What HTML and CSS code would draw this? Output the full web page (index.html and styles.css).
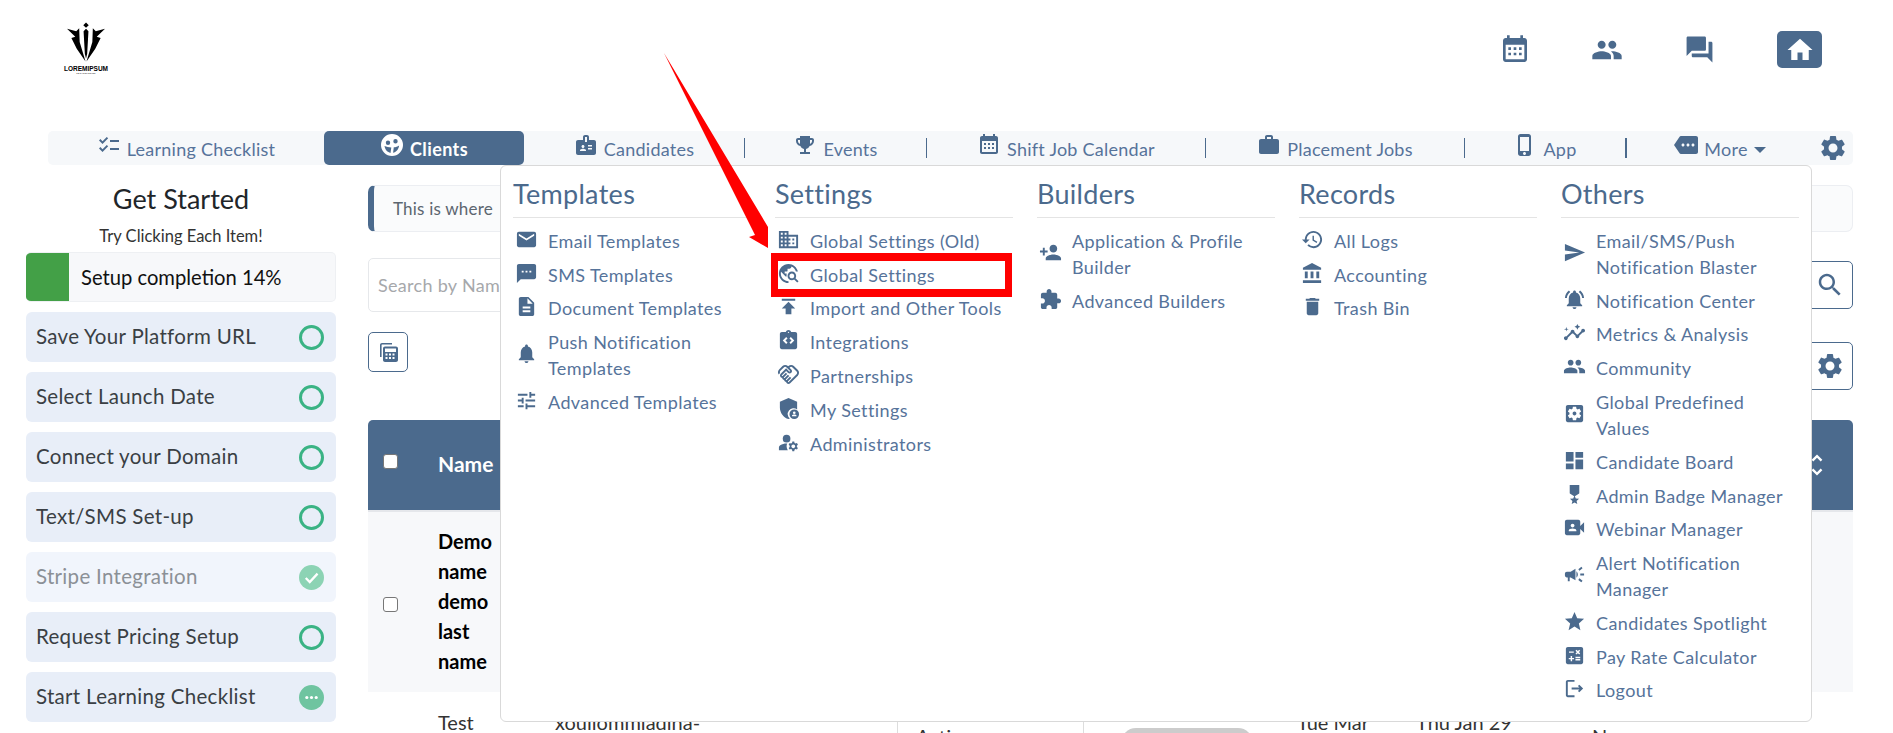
FILE: index.html
```html
<!DOCTYPE html>
<html lang="en">
<head>
<meta charset="utf-8">
<title>Clients</title>
<link rel="stylesheet" href="styles.css">
</head>
<body>
<svg class="sprite" aria-hidden="true">
<symbol id="i-email" viewBox="0 0 24 24"><path d="M20 4H4c-1.1 0-1.99.9-1.99 2L2 18c0 1.1.9 2 2 2h16c1.1 0 2-.9 2-2V6c0-1.1-.9-2-2-2zm0 4l-8 5-8-5V6l8 5 8-5v2z"/></symbol>
<symbol id="i-sms" viewBox="0 0 24 24"><path d="M20 2H4c-1.1 0-1.99.9-1.99 2L2 22l4-4h14c1.1 0 2-.9 2-2V4c0-1.1-.9-2-2-2zM9 11H7V9h2v2zm4 0h-2V9h2v2zm4 0h-2V9h2v2z"/></symbol>
<symbol id="i-doc" viewBox="0 0 24 24"><path d="M14 2H6c-1.1 0-1.99.9-1.99 2L4 20c0 1.1.89 2 1.99 2H18c1.1 0 2-.9 2-2V8l-6-6zm2 16H8v-2h8v2zm0-4H8v-2h8v2zm-3-5V3.500L18.500 9H13z"/></symbol>
<symbol id="i-bell" viewBox="0 0 24 24"><path d="M12 22c1.1 0 2-.9 2-2h-4c0 1.1.89 2 2 2zm6-6v-5c0-3.07-1.64-5.64-4.500-6.32V4c0-.83-.67-1.500-1.500-1.500s-1.500.67-1.500 1.500v.68C7.630 5.360 6 7.920 6 11v5l-2 2v1h16v-1l-2-2z"/></symbol>
<symbol id="i-tune" viewBox="0 0 24 24"><path d="M3 17v2h6v-2H3zM3 5v2h10V5H3zm10 16v-2h8v-2h-8v-2h-2v6h2zM7 9v2H3v2h4v2h2V9H7zm14 4v-2H11v2h10zm-6-4h2V7h4V5h-4V3h-2v6z"/></symbol>
<symbol id="i-domain" viewBox="0 0 24 24"><path d="M12 7V3H2v18h20V7H12zM6 19H4v-2h2v2zm0-4H4v-2h2v2zm0-4H4V9h2v2zm0-4H4V5h2v2zm4 12H8v-2h2v2zm0-4H8v-2h2v2zm0-4H8V9h2v2zm0-4H8V5h2v2zm10 12h-8v-2h2v-2h-2v-2h2v-2h-2V9h8v10zm-2-8h-2v2h2v-2zm0 4h-2v2h2v-2z"/></symbol>
<symbol id="i-travel" viewBox="0 0 24 24"><path d="M19.3 16.9c.4-.7.7-1.500.7-2.400 0-2.500-2-4.500-4.500-4.500S11 12 11 14.500s2 4.500 4.500 4.500c.9 0 1.700-.3 2.400-.7l3.200 3.200 1.400-1.400-3.200-3.200zm-3.800.1c-1.400 0-2.500-1.100-2.500-2.500s1.100-2.500 2.500-2.500 2.500 1.100 2.500 2.500-1.100 2.500-2.500 2.500zM12 20v2C6.480 22 2 17.520 2 12S6.480 2 12 2c4.840 0 8.870 3.440 9.800 8h-2.070c-.64-2.460-2.400-4.470-4.730-5.410V5c0 1.100-.9 2-2 2h-2v2c0 .55-.45 1-1 1H8v2h2v3H9l-4.790-4.790C4.080 10.790 4 11.380 4 12c0 4.410 3.590 8 8 8z"/></symbol>
<symbol id="i-publish" viewBox="0 0 24 24"><path d="M5 4v2h14V4H5zm0 10h4v6h6v-6h4l-7-7-7 7z"/></symbol>
<symbol id="i-integ" viewBox="0 0 24 24"><path d="M19 3h-4.180C14.400 1.840 13.300 1 12 1s-2.400.84-2.820 2H5c-1.100 0-2 .9-2 2v14c0 1.100.9 2 2 2h14c1.100 0 2-.9 2-2V5c0-1.100-.9-2-2-2zm-7-.25c.41 0 .75.34.75.75s-.34.75-.75.75-.75-.34-.75-.75.34-.75.75-.75zM11 14.170l-1.410 1.420L6 12l3.590-3.590L11 9.830 8.830 12 11 14.170zm3.410 1.420L13 14.170 15.170 12 13 9.830l1.410-1.420L18 12l-3.590 3.590z"/></symbol>
<symbol id="i-hand" viewBox="0 0 24 24"><path d="M12.220 19.850c-.18.18-.5.21-.71 0-.18-.18-.21-.5 0-.71l3.390-3.390-1.410-1.410-3.390 3.390c-.19.2-.51.19-.71 0-.21-.21-.18-.53 0-.71l3.390-3.390-1.410-1.410-3.390 3.390c-.18.18-.5.21-.71 0-.19-.19-.19-.51 0-.71l3.390-3.390-1.420-1.410-3.390 3.390c-.18.18-.5.21-.71 0-.19-.2-.19-.51 0-.71L9.520 8.400l1.870 1.860c.95.95 2.590.94 3.540 0 .98-.98.98-2.560 0-3.540l-1.860-1.860.28-.28c.78-.78 2.050-.78 2.830 0l4.240 4.240c.78.78.78 2.050 0 2.830l-8.200 8.200zm9.610-6.780c1.560-1.560 1.560-4.090 0-5.660l-4.240-4.240c-1.560-1.560-4.090-1.560-5.660 0l-.28.28-.28-.28c-1.560-1.560-4.090-1.560-5.660 0L2.170 6.710C.75 8.130.62 10.340 1.770 11.900l1.450-1.450c-.39-.75-.26-1.700.37-2.330l3.540-3.540c.78-.78 2.050-.78 2.830 0l3.560 3.560c.18.18.21.5 0 .71-.21.21-.53.18-.71 0L9.520 5.570l-5.660 5.660c-.98.97-.98 2.560 0 3.540.39.39.89.64 1.420.71.07.52.31 1.020.71 1.420.4.4.9.64 1.420.71.07.52.31 1.020.71 1.420.4.4.9.64 1.420.71.07.54.31 1.030.71 1.420.47.47 1.100.73 1.770.73.67 0 1.300-.26 1.770-.73l8.210-8.210z"/></symbol>
<symbol id="i-shield" viewBox="0 0 24 24"><path d="M12 1L3 5v6c0 5.550 3.840 10.740 9 12 .5-.12.99-.29 1.460-.5A6 6 0 0 1 21 13V5l-9-4z"/><path fill-rule="evenodd" d="M18 13a5 5 0 1 1 0 10 5 5 0 0 1 0-10zm0 2a1.400 1.400 0 1 0 0 2.800 1.400 1.400 0 0 0 0-2.800zm-2.300 4.200v.8h4.600v-.8c0-.6-1.500-1-2.300-1s-2.300.4-2.300 1z"/></symbol>
<symbol id="i-admin" viewBox="0 0 24 24"><circle cx="10" cy="8" r="4"/><path d="M10.670 13.020C10.450 13.010 10.230 13 10 13c-2.420 0-4.680.67-6.610 1.820-.88.52-1.390 1.500-1.390 2.530V20h9.260c-.79-1.130-1.260-2.510-1.260-4 0-1.070.25-2.070.67-2.980zM20.750 16c0-.22-.03-.42-.06-.63l1.140-1.010-1-1.730-1.450.49c-.32-.27-.68-.48-1.080-.63L18 11h-2l-.3 1.490c-.4.15-.76.36-1.080.63l-1.450-.49-1 1.730 1.140 1.010c-.03.21-.06.41-.06.63s.03.42.06.63l-1.140 1.010 1 1.730 1.450-.49c.32.27.68.48 1.080.63L16 21h2l.3-1.490c.4-.15.76-.36 1.080-.63l1.450.49 1-1.730-1.140-1.010c.03-.21.06-.41.06-.63zM17 18c-1.100 0-2-.9-2-2s.9-2 2-2 2 .9 2 2-.9 2-2 2z"/></symbol>
<symbol id="i-padd" viewBox="0 0 24 24"><path d="M15 12c2.210 0 4-1.790 4-4s-1.790-4-4-4-4 1.790-4 4 1.790 4 4 4zm-9-2V7H4v3H1v2h3v3h2v-3h3v-2H6zm9 4c-2.670 0-8 1.340-8 4v2h16v-2c0-2.660-5.330-4-8-4z"/></symbol>
<symbol id="i-ext" viewBox="0 0 24 24"><path d="M20.500 11H19V7c0-1.100-.9-2-2-2h-4V3.500C13 2.120 11.880 1 10.500 1S8 2.120 8 3.500V5H4c-1.100 0-1.990.9-1.990 2v3.800H3.500c1.490 0 2.700 1.210 2.700 2.700s-1.210 2.700-2.700 2.700H2V20c0 1.100.9 2 2 2h3.800v-1.500c0-1.490 1.210-2.700 2.700-2.700 1.490 0 2.700 1.210 2.700 2.700V22H17c1.100 0 2-.9 2-2v-4h1.500c1.380 0 2.500-1.120 2.500-2.500S21.880 11 20.500 11z"/></symbol>
<symbol id="i-hist" viewBox="0 0 24 24"><path d="M13 3c-4.970 0-9 4.030-9 9H1l3.890 3.890.07.14L9 12H6c0-3.870 3.130-7 7-7s7 3.130 7 7-3.130 7-7 7c-1.930 0-3.680-.79-4.940-2.060l-1.420 1.420C8.270 19.990 10.510 21 13 21c4.970 0 9-4.030 9-9s-4.030-9-9-9zm-1 5v5l4.280 2.540.72-1.210-3.500-2.080V8H12z"/></symbol>
<symbol id="i-bank" viewBox="0 0 24 24"><path d="M4 10v7h3v-7H4zm6 0v7h3v-7h-3zM2 22h19v-3H2v3zm14-12v7h3v-7h-3zm-4.500-9L2 6v2h19V6l-9.500-5z"/></symbol>
<symbol id="i-trash" viewBox="0 0 24 24"><path d="M6 19c0 1.100.9 2 2 2h8c1.100 0 2-.9 2-2V7H6v12zM19 4h-3.500l-1-1h-5l-1 1H5v2h14V4z"/></symbol>
<symbol id="i-send" viewBox="0 0 24 24"><path d="M2.010 21L23 12 2.010 3 2 10l15 2-15 2z"/></symbol>
<symbol id="i-bella" viewBox="0 0 24 24"><path d="M7.580 4.080L6.150 2.650C3.750 4.480 2.170 7.300 2.030 10.500h2c.15-2.650 1.510-4.970 3.550-6.420zm12.390 6.420h2c-.15-3.200-1.730-6.020-4.120-7.850l-1.420 1.430c2.020 1.450 3.390 3.770 3.540 6.420zM18 11c0-3.070-1.640-5.640-4.500-6.320V4c0-.83-.67-1.500-1.500-1.500s-1.500.67-1.500 1.500v.68C7.630 5.360 6 7.920 6 11v5l-2 2v1h16v-1l-2-2v-5zm-6 11c.14 0 .27-.01.4-.04.65-.14 1.180-.58 1.440-1.180.1-.24.15-.5.15-.78h-4c.01 1.100.9 2 2.010 2z"/></symbol>
<symbol id="i-insight" viewBox="0 0 24 24"><path d="M21 8c-1.450 0-2.260 1.440-1.930 2.510l-3.550 3.560c-.3-.09-.74-.09-1.040 0l-2.550-2.550C12.270 10.450 11.460 9 10 9c-1.450 0-2.270 1.440-1.930 2.520l-4.560 4.550C2.440 15.740 1 16.550 1 18c0 1.100.9 2 2 2 1.450 0 2.260-1.440 1.930-2.510l4.550-4.560c.3.09.74.09 1.040 0l2.550 2.550C12.730 16.550 13.540 18 15 18c1.450 0 2.270-1.440 1.930-2.520l3.560-3.550c1.070.33 2.510-.48 2.510-1.930 0-1.100-.9-2-2-2z"/><path d="M15 9l.94-2.070L18 6l-2.060-.93L15 3l-.92 2.070L12 6l2.080.93zM3.500 11L4 9l2-.5L4 8l-.5-2L3 8l-2 .5L3 9z"/></symbol>
<symbol id="i-people" viewBox="0 0 24 24"><path d="M16 11c1.660 0 2.990-1.340 2.990-3S17.660 5 16 5c-1.660 0-3 1.340-3 3s1.340 3 3 3zm-8 0c1.660 0 2.990-1.340 2.990-3S9.660 5 8 5C6.340 5 5 6.340 5 8s1.340 3 3 3zm0 2c-2.330 0-7 1.170-7 3.500V19h14v-2.500c0-2.330-4.670-3.500-7-3.500zm8 0c-.29 0-.62.02-.97.05 1.160.84 1.970 1.970 1.970 3.450V19h6v-2.500c0-2.330-4.670-3.500-7-3.500z"/></symbol>
<symbol id="i-sapp" viewBox="0 0 24 24"><path d="M12 10c-1.100 0-2 .9-2 2s.9 2 2 2 2-.9 2-2-.9-2-2-2zm7-7H5c-1.110 0-2 .9-2 2v14c0 1.100.89 2 2 2h14c1.110 0 2-.9 2-2V5c0-1.100-.89-2-2-2zm-1.750 9c0 .23-.02.46-.05.68l1.480 1.160c.13.11.17.3.08.45l-1.400 2.420c-.09.15-.27.21-.43.15l-1.740-.7c-.36.28-.76.51-1.180.69l-.26 1.850c-.03.17-.18.3-.35.3h-2.800c-.17 0-.32-.13-.35-.29l-.26-1.850c-.43-.18-.82-.41-1.180-.69l-1.740.7c-.16.06-.34 0-.43-.15l-1.400-2.420c-.09-.15-.05-.34.08-.45l1.480-1.160c-.03-.23-.05-.46-.05-.69 0-.23.02-.46.05-.68l-1.480-1.160c-.13-.11-.17-.3-.08-.45l1.400-2.420c.09-.15.27-.21.43-.15l1.740.7c.36-.28.76-.51 1.180-.69l.26-1.850c.03-.17.18-.3.35-.3h2.800c.17 0 .32.13.35.29l.26 1.850c.43.18.82.41 1.180.69l1.740-.7c.16-.06.34 0 .43.15l1.400 2.420c.09.15.05.34-.08.45l-1.480 1.160c.03.23.05.46.05.69z"/></symbol>
<symbol id="i-dash" viewBox="0 0 24 24"><path d="M3 13h8V3H3v10zm0 8h8v-6H3v6zm10 0h8V11h-8v10zm0-18v6h8V3h-8z"/></symbol>
<symbol id="i-medal" viewBox="0 0 24 24"><path d="M17 10.430V2H7v8.430c0 .35.18.68.49.86l4.180 2.510-.99 2.340-3.410.29 2.590 2.240L9.070 22 12 20.230 14.930 22l-.78-3.330 2.590-2.240-3.410-.29-.99-2.340 4.180-2.510c.3-.18.48-.5.48-.86z"/></symbol>
<symbol id="i-video" viewBox="0 0 24 24"><path d="M18 10.480V6c0-1.100-.9-2-2-2H4c-1.100 0-2 .9-2 2v12c0 1.100.9 2 2 2h12c1.100 0 2-.9 2-2v-4.480l4 3.980v-11l-4 3.980zM10 8c1.100 0 2 .9 2 2s-.9 2-2 2-2-.9-2-2 .9-2 2-2zm4 8H6v-.57c0-.81.48-1.530 1.220-1.850.85-.37 1.790-.58 2.780-.58.99 0 1.930.21 2.780.58.74.32 1.220 1.040 1.220 1.850V16z"/></symbol>
<symbol id="i-camp" viewBox="0 0 24 24"><path d="M18 11v2h4v-2h-4zm-2 6.610c.96.71 2.210 1.650 3.200 2.390.4-.53.8-1.070 1.200-1.600-.99-.74-2.240-1.680-3.200-2.400-.4.54-.8 1.080-1.200 1.610zM20.400 5.600c-.4-.53-.8-1.070-1.200-1.600-.99.74-2.240 1.680-3.200 2.400.4.53.8 1.070 1.200 1.600.96-.72 2.210-1.650 3.200-2.400zM4 9c-1.100 0-2 .9-2 2v2c0 1.100.9 2 2 2h1v4h2v-4h1l5 3V6L8 9H4zm11.500 3c0-1.330-.58-2.530-1.500-3.350v6.690c.92-.81 1.500-2.010 1.500-3.340z"/></symbol>
<symbol id="i-star" viewBox="0 0 24 24"><path d="M12 17.270L18.180 21l-1.640-7.030L22 9.240l-7.190-.61L12 2 9.190 8.630 2 9.240l5.460 4.730L5.820 21z"/></symbol>
<symbol id="i-calc" viewBox="0 0 24 24"><path d="M19 3H5c-1.100 0-2 .9-2 2v14c0 1.100.9 2 2 2h14c1.100 0 2-.9 2-2V5c0-1.100-.9-2-2-2zm-5.970 4.060L14.090 6l1.410 1.410L16.910 6l1.060 1.060-1.410 1.410 1.410 1.410-1.060 1.060-1.410-1.400-1.410 1.410-1.060-1.060 1.410-1.410-1.410-1.420zm-6.780.66h5v1.500h-5v-1.500zM11.500 16h-2v2H8v-2H6v-1.500h2v-2h1.500v2h2V16zm6.500 1.250h-5v-1.500h5v1.500zm0-2.500h-5v-1.500h5v1.500z"/></symbol>
<symbol id="i-logout" viewBox="0 0 24 24"><path d="M17 8l-1.410 1.410L17.170 11H9v2h8.170l-1.580 1.580L17 16l4-4-4-4zM5 5h7V3H5c-1.100 0-2 .9-2 2v14c0 1.100.9 2 2 2h7v-2H5V5z"/></symbol>
<symbol id="i-check" viewBox="0 0 24 24"><path d="M22 7h-9v2h9V7zm0 8h-9v2h9v-2zM5.540 11L2 7.460l1.410-1.410 2.120 2.120 4.240-4.240 1.410 1.410L5.540 11zm0 8L2 15.460l1.410-1.410 2.120 2.120 4.240-4.240 1.410 1.410L5.540 19z"/></symbol>
<symbol id="i-face" viewBox="0 0 24 24"><path fill-rule="evenodd" d="M12 1a11 11 0 1 1 0 22 11 11 0 0 1 0-22zM8 7.500a2.200 2.200 0 1 0 0 4.400 2.200 2.200 0 0 0 0-4.400zm7.500-1.500a2.200 2.200 0 1 0 0 4.400 2.200 2.200 0 0 0 0-4.400zM4.500 13c.5 3.800 3.200 6.300 6 6.900l.8-5.400c-2.400-.1-4.800-.6-6.800-1.500zm9.300 1.300l-.7 5.500c2.800-.5 5.600-3.500 6-7.400-1.500 1-3.400 1.700-5.300 1.900z"/></symbol>
<symbol id="i-badge" viewBox="0 0 24 24"><path d="M20 7h-5V4c0-1.100-.9-2-2-2h-2c-1.100 0-2 .9-2 2v3H4c-1.100 0-2 .9-2 2v11c0 1.100.9 2 2 2h16c1.100 0 2-.9 2-2V9c0-1.100-.9-2-2-2zM9 12c.83 0 1.500.67 1.500 1.500S9.830 15 9 15s-1.500-.67-1.500-1.500S8.170 12 9 12zm3 6H6v-.75c0-1 2-1.500 3-1.500s3 .5 3 1.500V18zm1-9h-2V4h2v5zm5 7.500h-4V15h4v1.500zm0-3h-4V12h4v1.500z"/></symbol>
<symbol id="i-trophy" viewBox="0 0 24 24"><path d="M19 5h-2V3H7v2H5c-1.100 0-2 .9-2 2v1c0 2.550 1.920 4.630 4.390 4.940.63 1.500 1.980 2.630 3.610 2.960V19H7v2h10v-2h-4v-3.100c1.630-.33 2.980-1.460 3.610-2.960C19.080 12.630 21 10.550 21 8V7c0-1.100-.9-2-2-2zM5 8V7h2v3.820C5.840 10.400 5 9.300 5 8zm14 0c0 1.300-.84 2.400-2 2.820V7h2v1z"/></symbol>
<symbol id="i-cal" viewBox="0 0 24 24"><path d="M19 3h-1V1h-2v2H8V1H6v2H5c-1.110 0-2 .9-2 2v14c0 1.100.89 2 2 2h14c1.100 0 2-.9 2-2V5c0-1.100-.9-2-2-2zm0 16H5V8h14v11z"/><path d="M7 10h2v2H7zM11 10h2v2h-2zM15 10h2v2h-2zM7 14h2v2H7zM11 14h2v2h-2zM15 14h2v2h-2z"/></symbol>
<symbol id="i-work" viewBox="0 0 24 24"><path d="M20 6h-4V4c0-1.110-.89-2-2-2h-4c-1.110 0-2 .89-2 2v2H4c-1.110 0-1.990.89-1.990 2L2 19c0 1.110.89 2 2 2h16c1.110 0 2-.89 2-2V8c0-1.110-.89-2-2-2zm-6 0h-4V4h4v2z"/></symbol>
<symbol id="i-phone" viewBox="0 0 24 24"><path d="M15.500 1h-8C6.120 1 5 2.120 5 3.500v17C5 21.880 6.120 23 7.500 23h8c1.380 0 2.500-1.120 2.500-2.500v-17C18 2.120 16.880 1 15.500 1zm-4 21c-.83 0-1.500-.67-1.500-1.500s.67-1.500 1.500-1.500 1.500.67 1.500 1.500-.67 1.500-1.500 1.500zm4.500-4H7V4h9v14z"/></symbol>
<symbol id="i-more" viewBox="0 0 24 24"><path d="M22 3H7c-.69 0-1.230.35-1.590.88L0 12l5.410 8.110c.36.53.9.89 1.590.89h15c1.100 0 2-.9 2-2V5c0-1.100-.9-2-2-2zM9 13.500c-.83 0-1.500-.67-1.500-1.500s.67-1.500 1.500-1.500 1.500.67 1.500 1.500-.67 1.500-1.500 1.500zm5 0c-.83 0-1.500-.67-1.500-1.500s.67-1.500 1.500-1.500 1.500.67 1.500 1.500-.67 1.500-1.500 1.500zm5 0c-.83 0-1.500-.67-1.500-1.500s.67-1.500 1.500-1.500 1.500.67 1.500 1.500-.67 1.500-1.500 1.500z"/></symbol>
<symbol id="i-gear" viewBox="0 0 24 24"><path d="M19.140 12.940c.04-.3.06-.61.06-.94 0-.32-.02-.64-.07-.94l2.030-1.580c.18-.14.23-.41.12-.61l-1.920-3.320c-.12-.22-.37-.29-.59-.22l-2.390.96c-.5-.38-1.030-.7-1.620-.94l-.36-2.540c-.04-.24-.24-.41-.48-.41h-3.840c-.24 0-.43.17-.47.41l-.36 2.540c-.59.24-1.130.57-1.620.94l-2.390-.96c-.22-.08-.47 0-.59.22L2.740 8.870c-.12.21-.08.47.12.61l2.030 1.580c-.05.3-.09.63-.09.94s.02.64.07.94l-2.030 1.580c-.18.14-.23.41-.12.61l1.920 3.320c.12.22.37.29.59.22l2.390-.96c.5.38 1.030.7 1.620.94l.36 2.540c.05.24.24.41.48.41h3.840c.24 0 .44-.17.47-.41l.36-2.540c.59-.24 1.130-.56 1.620-.94l2.390.96c.22.08.47 0 .59-.22l1.920-3.320c.12-.22.07-.47-.12-.61l-2.010-1.580zM12 15.600c-1.980 0-3.600-1.620-3.600-3.600s1.620-3.600 3.600-3.600 3.600 1.620 3.600 3.600-1.620 3.600-3.600 3.600z"/></symbol>
<symbol id="i-home" viewBox="0 0 24 24"><path d="M10 20v-6h4v6h5v-8h3L12 3 2 12h3v8z"/></symbol>
<symbol id="i-forum" viewBox="0 0 24 24"><path d="M21 6h-2v9H6v2c0 .55.45 1 1 1h11l4 4V7c0-.55-.45-1-1-1zm-4 6V3c0-.55-.45-1-1-1H3c-.55 0-1 .45-1 1v14l4-4h10c.55 0 1-.45 1-1z"/></symbol>
<symbol id="i-search" viewBox="0 0 24 24"><path d="M15.500 14h-.79l-.28-.27C15.410 12.590 16 11.110 16 9.500 16 5.910 13.090 3 9.500 3S3 5.910 3 9.500 5.910 16 9.500 16c1.610 0 3.090-.59 4.230-1.570l.27.28v.79l5 4.990L20.490 19l-4.990-5zm-6 0C7.010 14 5 11.990 5 9.500S7.010 5 9.500 5 14 7.010 14 9.500 11.990 14 9.500 14z"/></symbol>
<symbol id="i-stack" viewBox="0 0 24 24"><path d="M4 17V5c0-1.100.9-2 2-2h10v1.600H6c-.2 0-.4.2-.4.4v12H4z"/><path fill-rule="evenodd" d="M9 6.500h11c1.100 0 2 .9 2 2V20c0 1.100-.9 2-2 2H9c-1.100 0-2-.9-2-2V8.500c0-1.100.9-2 2-2zm0 2V12h11V8.500H9zm.5 5v2h2v-2h-2zm3.500 0v2h2v-2h-2zm3.500 0v2h2v-2h-2zm-7 3.500v2h2v-2h-2zm3.500 0v2h2v-2h-2zm3.500 0v2h2v-2h-2z"/></symbol>
<symbol id="i-unfold" viewBox="0 0 24 24"><path d="M12 5.830L15.170 9l1.410-1.410L12 3 7.410 7.590 8.830 9 12 5.830zm0 12.340L8.830 15l-1.410 1.410L12 21l4.590-4.590L15.170 15 12 18.170z"/></symbol>
</svg>

<header class="topbar">
  <div class="logo">
    <svg class="logo-mark" viewBox="0 0 40 40"><path d="M19.500 0l2.800 2.800-2.800 2.600-2.800-2.600zM0 6.500l9.500 2.500 3-3 .5 14 6 20-9-13-5.500-11 4-1.500zM39 6.500l-9.500 2.500-3-3-.5 14-6 20 9-13 5.500-11-4-1.500zM19.500 6.500l-2.500 2.500 1.300 23 1.200 5 1.200-5 1.300-23z"/></svg>
    <span class="logo-name">LOREMIPSUM</span>
    <span class="logo-tag">TECHNOLOGIES</span>
  </div>
  <div class="top-icons">
    <svg class="top-cal"><use href="#i-cal"/></svg>
    <svg class="top-people"><use href="#i-people"/></svg>
    <svg class="top-forum"><use href="#i-forum"/></svg>
    <span class="home-btn"><svg><use href="#i-home"/></svg></span>
  </div>
</header>

<nav class="nav">
  <a class="nav-item"><svg><use href="#i-check"/></svg><span>Learning Checklist</span></a>
  <a class="nav-item nav-active"><svg><use href="#i-face"/></svg><span>Clients</span></a>
  <a class="nav-item sep"><svg><use href="#i-badge"/></svg><span>Candidates</span></a>
  <a class="nav-item sep"><svg><use href="#i-trophy"/></svg><span>Events</span></a>
  <a class="nav-item sep"><svg><use href="#i-cal"/></svg><span>Shift Job Calendar</span></a>
  <a class="nav-item sep"><svg><use href="#i-work"/></svg><span>Placement Jobs</span></a>
  <a class="nav-item sep sep-strong"><svg><use href="#i-phone"/></svg><span>App</span></a>
  <a class="nav-item"><svg><use href="#i-more"/></svg><span>More</span><i class="caret"></i></a>
  <a class="nav-gear"><svg><use href="#i-gear"/></svg></a>
</nav>

<div class="page">
  <aside class="sidebar">
    <h2 class="side-title">Get Started</h2>
    <p class="side-sub">Try Clicking Each Item!</p>
    <div class="progress"><i class="progress-fill"></i><span>Setup completion 14%</span></div>
    <div class="step"><span>Save Your Platform URL</span><i class="ring"></i></div>
    <div class="step"><span>Select Launch Date</span><i class="ring"></i></div>
    <div class="step"><span>Connect your Domain</span><i class="ring"></i></div>
    <div class="step"><span>Text/SMS Set-up</span><i class="ring"></i></div>
    <div class="step step-done"><span>Stripe Integration</span><svg class="state" viewBox="0 0 24 24"><circle cx="12" cy="12" r="12" fill="#8cd3b4"/><path d="M6.500 12.500l3.800 3.800 7.500-8" fill="none" stroke="#fff" stroke-width="2.200"/></svg></div>
    <div class="step"><span>Request Pricing Setup</span><i class="ring"></i></div>
    <div class="step"><span>Start Learning Checklist</span><svg class="state" viewBox="0 0 24 24"><circle cx="12" cy="12" r="12" fill="#6fc4a0"/><circle cx="7.500" cy="12" r="1.500" fill="#fff"/><circle cx="12" cy="12" r="1.500" fill="#fff"/><circle cx="16.500" cy="12" r="1.500" fill="#fff"/></svg></div>
  </aside>

  <main class="main">
    <div class="alert">This is where</div>
    <div class="search-row">
      <div class="search-input">Search by Nam</div>
      <button class="out-btn out-wide"><svg><use href="#i-search"/></svg></button>
    </div>
    <div class="tool-row">
      <button class="out-btn out-calc"><svg><use href="#i-stack"/></svg></button>
      <button class="out-btn out-wide out-gear"><svg><use href="#i-gear"/></svg></button>
    </div>
    <div class="thead">
      <span class="cell-check"><i class="box"></i></span>
      <span class="th-name">Name</span>
      <svg class="sort"><use href="#i-unfold"/></svg>
    </div>
    <div class="row-demo">
      <span class="cell-check"><i class="box box-dark"></i></span>
      <span class="demo-name">Demo name demo last name</span>
    </div>
    <div class="row-test">
      <span>Test</span>
      <span>xouiiommiadina-</span>
      <span class="c-status"><b>Active</b></span>
      <span class="c-pill"><i></i></span>
      <span>Tue Mar</span>
      <span>Thu Jan 29</span>
      <span class="c-no">No</span>
    </div>
  </main>
</div>

<div class="mega">
  <section class="mega-col">
    <h3>Templates</h3>
    <a><svg><use href="#i-email"/></svg><span>Email Templates</span></a>
    <a><svg><use href="#i-sms"/></svg><span>SMS Templates</span></a>
    <a><svg><use href="#i-doc"/></svg><span>Document Templates</span></a>
    <a><svg><use href="#i-bell"/></svg><span>Push Notification Templates</span></a>
    <a><svg><use href="#i-tune"/></svg><span>Advanced Templates</span></a>
  </section>
  <section class="mega-col">
    <h3>Settings</h3>
    <a><svg><use href="#i-domain"/></svg><span>Global Settings (Old)</span></a>
    <a><svg><use href="#i-travel"/></svg><span>Global Settings</span></a>
    <a><svg><use href="#i-publish"/></svg><span>Import and Other Tools</span></a>
    <a><svg><use href="#i-integ"/></svg><span>Integrations</span></a>
    <a><svg><use href="#i-hand"/></svg><span>Partnerships</span></a>
    <a><svg><use href="#i-shield"/></svg><span>My Settings</span></a>
    <a><svg><use href="#i-admin"/></svg><span>Administrators</span></a>
  </section>
  <section class="mega-col">
    <h3>Builders</h3>
    <a><svg><use href="#i-padd"/></svg><span>Application &amp; Profile Builder</span></a>
    <a><svg><use href="#i-ext"/></svg><span>Advanced Builders</span></a>
  </section>
  <section class="mega-col">
    <h3>Records</h3>
    <a><svg><use href="#i-hist"/></svg><span>All Logs</span></a>
    <a><svg><use href="#i-bank"/></svg><span>Accounting</span></a>
    <a><svg><use href="#i-trash"/></svg><span>Trash Bin</span></a>
  </section>
  <section class="mega-col">
    <h3>Others</h3>
    <a><svg><use href="#i-send"/></svg><span>Email/SMS/Push Notification Blaster</span></a>
    <a><svg><use href="#i-bella"/></svg><span>Notification Center</span></a>
    <a><svg><use href="#i-insight"/></svg><span>Metrics &amp; Analysis</span></a>
    <a><svg><use href="#i-people"/></svg><span>Community</span></a>
    <a><svg><use href="#i-sapp"/></svg><span>Global Predefined Values</span></a>
    <a><svg><use href="#i-dash"/></svg><span>Candidate Board</span></a>
    <a><svg><use href="#i-medal"/></svg><span>Admin Badge Manager</span></a>
    <a><svg><use href="#i-video"/></svg><span>Webinar Manager</span></a>
    <a><svg><use href="#i-camp"/></svg><span>Alert Notification Manager</span></a>
    <a><svg><use href="#i-star"/></svg><span>Candidates Spotlight</span></a>
    <a><svg><use href="#i-calc"/></svg><span>Pay Rate Calculator</span></a>
    <a><svg><use href="#i-logout"/></svg><span>Logout</span></a>
  </section>
</div>

<svg class="red-arrow" viewBox="0 0 1893 733"><polygon points="664,53 768,227 768,248 749,237 755,235"/></svg>
<div class="red-box"></div>
</body>
</html>
```
FILE: styles.css
```css
* { box-sizing: border-box; }
html, body { margin: 0; height: 733px; overflow: hidden; }
body { font-family: "Lato", "Liberation Sans", sans-serif; color: #212529; background: #fff; position: relative; }
.sprite { display: none; }
svg { fill: currentColor; display: block; flex: none; }

.topbar { height: 131px; display: flex; justify-content: space-between; align-items: flex-start; padding: 22px 71px 0 65px; }
.logo { width: 42px; display: flex; flex-direction: column; align-items: center; color: #000; }
.logo-mark { width: 39px; height: 40px; }
.logo-name { font: 700 6.500px/7px "Liberation Sans", sans-serif; margin-top: 3px; white-space: nowrap; }
.logo-tag { font: 400 2px/2px "Liberation Sans", sans-serif; white-space: nowrap; letter-spacing: .3px; }
.top-icons { display: flex; align-items: center; gap: 62px; height: 37px; margin-top: 9px; color: #4b6a8d; }
.top-cal { width: 32px; height: 32px; margin-right: -1.500px; }
.top-people { width: 32px; height: 32px; }
.top-forum { width: 31px; height: 31px; margin-left: -1px; }
.home-btn { width: 45px; height: 37px; border-radius: 5px; background: #4b6a8d; color: #fff; display: flex; align-items: center; justify-content: center; }
.home-btn svg { width: 30px; height: 30px; }

.nav { margin: 0 40px 0 48px; height: 34px; background: #f6f8fa; border-radius: 5px; display: grid; grid-template-columns: 276px 200px 221px 182px 279px 259px 162px 186px 40px; align-items: center; color: #4b6a8d; font-size: 18px; letter-spacing: .25px; }
.nav-item { height: 20px; display: flex; align-items: center; justify-content: center; gap: 6px; white-space: nowrap; }
.nav-item svg { width: 24px; height: 24px; margin-top: -7px; }
.nav-item span { margin-top: 2px; color: #56739a; }
.sep { border-right: 1px solid #4b6a8d; }
.sep-strong { border-right-width: 2px; }
.nav-active { height: 34px; background: #4b6a8d; color: #fff; border-radius: 5px; font-weight: 700; letter-spacing: .4px; }
.nav-item.nav-active span { color: #fff; }
.caret { width: 0; height: 0; border: 6px solid transparent; border-top: 6px solid #4b6a8d; border-bottom: 0; margin-top: 4px; }
.nav-gear svg { width: 30px; height: 30px; margin-left: 5px; }

.page { display: flex; padding: 0 40px 0 26px; gap: 32px; }
.sidebar { width: 310px; flex: none; padding-top: 19px; }
.side-title { margin: -1px 0 1px; text-align: center; font-weight: 400; font-size: 27px; line-height: 32px; }
.side-sub { margin: 10px 0 5px; text-align: center; font-size: 16.500px; line-height: 22px; font-weight: 400; color: #333; }
.progress { height: 50px; display: flex; align-items: center; background: #f7f8fa; border: 1px solid #eef0f3; border-left: 0; border-radius: 5px; font-size: 20.200px; color: #111; gap: 12px; overflow: hidden; }
.progress-fill { width: 43px; height: 50px; background: #43a047; }
.step { height: 50px; margin-top: 10px; padding: 0 10px 2px; background: #e8eef8; border-radius: 6px; display: flex; align-items: center; justify-content: space-between; font-size: 20.500px; letter-spacing: .3px; color: #3a3f44; }
.step-done { background: #f1f5fc; color: #8b9096; }
.ring { width: 25px; height: 25px; border: 3px solid #3ab384; border-radius: 50%; margin: 2px 2px 0 0; }
.state { width: 25px; height: 25px; margin: 2px 2px 0 0; }

.main { flex: 1; min-width: 0; padding-top: 20px; }
.alert { height: 47px; background: #fafbfc; border: 1px solid #eceef2; border-left: 6px solid #4b6a8d; border-radius: 7px; padding-left: 19px; display: flex; align-items: center; font-size: 17px; letter-spacing: .2px; color: #5c6670; }
.search-row { display: flex; align-items: center; gap: 10px; height: 54px; margin-top: 26px; }
.search-input { flex: 1; height: 54px; border: 1px solid #e6e8eb; border-radius: 5px; padding-left: 9px; display: flex; align-items: center; font-size: 18px; letter-spacing: .3px; color: #a6a8ab; }
.out-btn { padding: 0; background: #fff; border: 1px solid #4b6a8d; border-radius: 5px; color: #4b6a8d; display: flex; align-items: center; justify-content: center; }
.out-wide { width: 46px; height: 48px; }
.out-wide svg { width: 30px; height: 30px; }
.out-calc { width: 40px; height: 40px; }
.out-calc svg { width: 24px; height: 24px; }
.tool-row { display: flex; justify-content: space-between; align-items: flex-start; height: 58px; margin-top: 20px; }
.out-gear { margin-top: 10px; }

.thead { margin-top: 30px; height: 92px; background: #4b6a8d; border-bottom: 2px solid #e5e7eb; border-radius: 5px 5px 0 0; color: #fff; display: flex; align-items: center; }
.cell-check { width: 70px; flex: none; padding-left: 15px; }
.box { display: block; width: 15px; height: 15px; background: #fff; border: 1px solid #777; border-radius: 3px; }
.thead .cell-check { margin-top: -8px; }
.th-name { font-weight: 700; font-size: 21px; margin-top: -4px; }
.sort { width: 28px; height: 28px; margin-left: auto; margin-right: 22px; }
.row-demo { height: 180px; background: #f7f8fa; display: flex; align-items: center; padding-bottom: 3px; }
.row-demo .cell-check { margin-top: 8px; }
.demo-name { width: 76px; font-weight: 700; font-size: 20px; line-height: 30px; color: #000; }
.row-test { display: grid; grid-template-columns: 117px 342px 186px 214px 119px 176px 1fr; padding: 15px 0 0 70px; font-size: 20px; line-height: 30px; color: #333; }
.c-status { border-left: 1px solid #ddd; padding: 14px 0 0 18px; }
.c-status b { font-weight: 400; }
.c-pill { border-left: 1px solid #ddd; padding: 21px 0 0 37px; }
.c-pill i { display: block; width: 132px; height: 30px; background: #ccc; border-radius: 15px; }
.c-no { padding-top: 14px; }

.mega { position: absolute; left: 500px; top: 165px; width: 1312px; height: 557px; background: #fff; border: 1px solid #d9d9d9; border-radius: 6px; display: grid; grid-template-columns: repeat(5, 1fr); color: #4b6a8d; padding-top: 11px; overflow: hidden; }
.mega-col { padding: 0 12px; font-size: 18px; line-height: 26px; letter-spacing: .4px; }
.mega-col h3 { margin: 0 0 6px; padding: 0 0 7px; font-size: 27px; line-height: 33px; font-weight: 400; letter-spacing: .3px; border-bottom: 1px solid #e4e4e4; }
.mega-col a { display: flex; align-items: center; padding: 3.900px 0 3.900px 2px; gap: 10px; }
.mega-col span { color: #56739a; }
.mega-col svg { width: 23px; height: 23px; margin-top: -3px; }

.red-arrow { position: absolute; left: 0; top: 0; width: 1893px; height: 733px; fill: #f00; pointer-events: none; }
.red-box { position: absolute; left: 771px; top: 253px; width: 241px; height: 44px; border: solid #f00; border-width: 8px 7px; }
```
